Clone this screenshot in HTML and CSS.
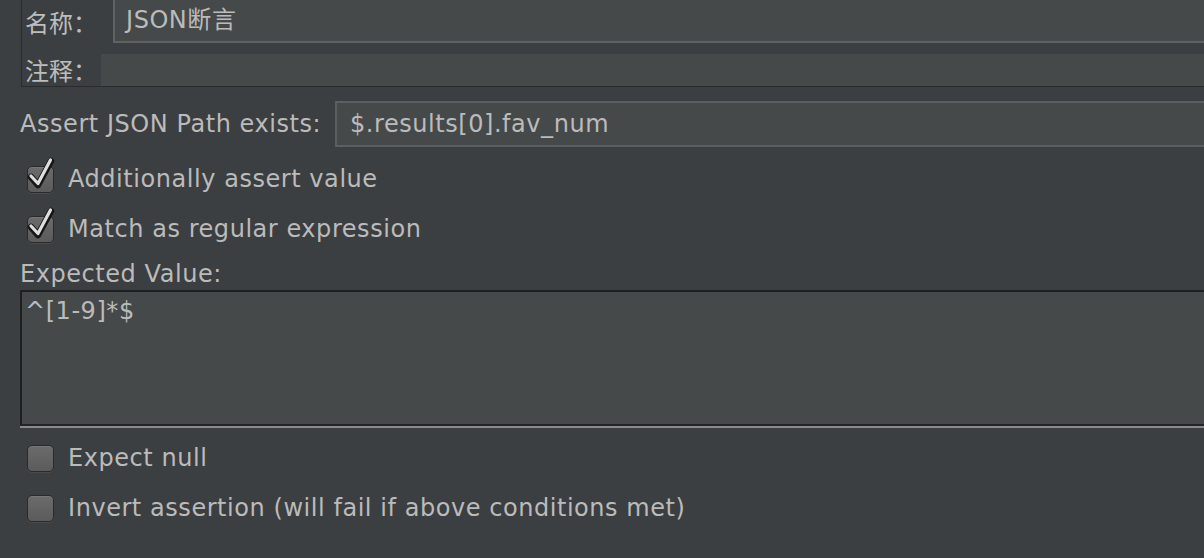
FILE: index.html
```html
<!DOCTYPE html>
<html lang="zh">
<head>
<meta charset="utf-8">
<title>JSON断言</title>
<link rel="stylesheet" href="styles.css">
</head>
<body>
<div class="page">
  <section class="name-panel">
    <div class="name-row">
      <span class="label label-name">名称：</span>
      <div class="field field-name">JSON断言</div>
    </div>
    <div class="comment-row">
      <span class="label label-comment">注释：</span>
      <div class="field field-comment"></div>
    </div>
  </section>

  <div class="path-row">
    <span class="label label-path">Assert JSON Path exists:</span>
    <div class="field field-path">$.results[0].fav_num</div>
  </div>

  <div class="check">
    <span class="box">
      <svg class="tick" viewBox="0 0 30 34" width="30" height="34">
        <path d="M6 20 L13 28 L26 4" fill="none" stroke="#161616" stroke-width="6.5" stroke-linecap="round" stroke-linejoin="round"/>
        <path d="M6 19 L13 26.5 L25.5 3" fill="none" stroke="#dedede" stroke-width="3.2" stroke-linecap="round" stroke-linejoin="round"/>
      </svg>
    </span>
    <span class="check-text">Additionally assert value</span>
  </div>
  <div class="check">
    <span class="box">
      <svg class="tick" viewBox="0 0 30 34" width="30" height="34">
        <path d="M6 20 L13 28 L26 4" fill="none" stroke="#161616" stroke-width="6.5" stroke-linecap="round" stroke-linejoin="round"/>
        <path d="M6 19 L13 26.5 L25.5 3" fill="none" stroke="#dedede" stroke-width="3.2" stroke-linecap="round" stroke-linejoin="round"/>
      </svg>
    </span>
    <span class="check-text">Match as regular expression</span>
  </div>

  <div class="expected-label">Expected Value:</div>
  <div class="textarea">^[1-9]*$</div>

  <div class="check check-low">
    <span class="box"></span>
    <span class="check-text">Expect null</span>
  </div>
  <div class="check">
    <span class="box"></span>
    <span class="check-text">Invert assertion (will fail if above conditions met)</span>
  </div>
</div>
</body>
</html>
```

FILE: styles.css
```css
html, body {
  margin: 0;
  padding: 0;
  background: #3c3f41;
}

body {
  width: 1204px;
  height: 558px;
  overflow: hidden;
  font-family: "DejaVu Sans", "Noto Sans CJK SC", sans-serif;
  font-size: 24px;
  letter-spacing: 0.55px;
  color: #bbbbbb;
}

.page {
  display: flex;
  flex-direction: column;
}

.label {
  white-space: nowrap;
}

/* ---- name / comment panel ---- */
.name-panel {
  margin-left: 21px;
  height: 86px;
  border-left: 1px solid #2a2b2c;
  border-bottom: 1px solid #2a2b2c;
  display: flex;
  flex-direction: column;
}

.name-row {
  height: 43px;
  display: flex;
  align-items: stretch;
}

.label-name,
.label-comment {
  font-family: "Noto Sans CJK SC", sans-serif;
  font-size: 24px;
  letter-spacing: 0;
  padding-left: 3px;
  color: #bdbdbd;
}

.label-name {
  width: 88px;
  line-height: 43px;
}

.field {
  background: #45494a;
  flex: 1;
}

.field-name {
  border-left: 2px solid #5f6263;
  border-bottom: 2px solid #5f6263;
  padding-left: 11px;
  line-height: 41px;
}

.comment-row {
  margin-top: 11px;
  height: 32px;
  display: flex;
}

.label-comment {
  width: 76px;
  line-height: 32px;
}

/* ---- JSON path ---- */
.path-row {
  margin-top: 14px;
  height: 46px;
  display: flex;
  align-items: center;
}

.label-path {
  padding-left: 20px;
  width: 315px;
}

.field-path {
  height: 42px;
  border: 2px solid #5c5f60;
  border-right: none;
  padding-left: 13px;
  line-height: 42px;
}

/* ---- checkboxes ---- */
.check {
  height: 50px;
  display: flex;
  align-items: center;
  padding-left: 27px;
}

.path-row + .check {
  margin-top: 7px;
}

.box {
  position: relative;
  width: 27px;
  height: 27px;
  box-sizing: border-box;
  border: 1px solid #2a2a2a;
  border-radius: 5px;
  background: linear-gradient(#6b6b6b, #5b5b5b);
  box-shadow: 0 1px 0 #4a4b4c, inset 0 1px 0 #777777;
  flex: none;
}

.tick {
  position: absolute;
  left: -3px;
  top: -10px;
}

.check-text {
  margin-left: 14px;
  white-space: nowrap;
}

/* ---- expected value ---- */
.expected-label {
  height: 36px;
  padding-left: 20px;
  box-sizing: border-box;
  padding-top: 4px;
  line-height: 32px;
}

.textarea {
  margin-left: 20px;
  height: 136px;
  box-sizing: border-box;
  background: #45494a;
  border-top: 2px solid #1e1f20;
  border-left: 2px solid #1e1f20;
  border-bottom: 2px solid #232425;
  box-shadow: 0 2px 0 #8a8b8c;
  padding-left: 3px;
  line-height: 38px;
}

.check-low {
  margin-top: 7px;
}
```
